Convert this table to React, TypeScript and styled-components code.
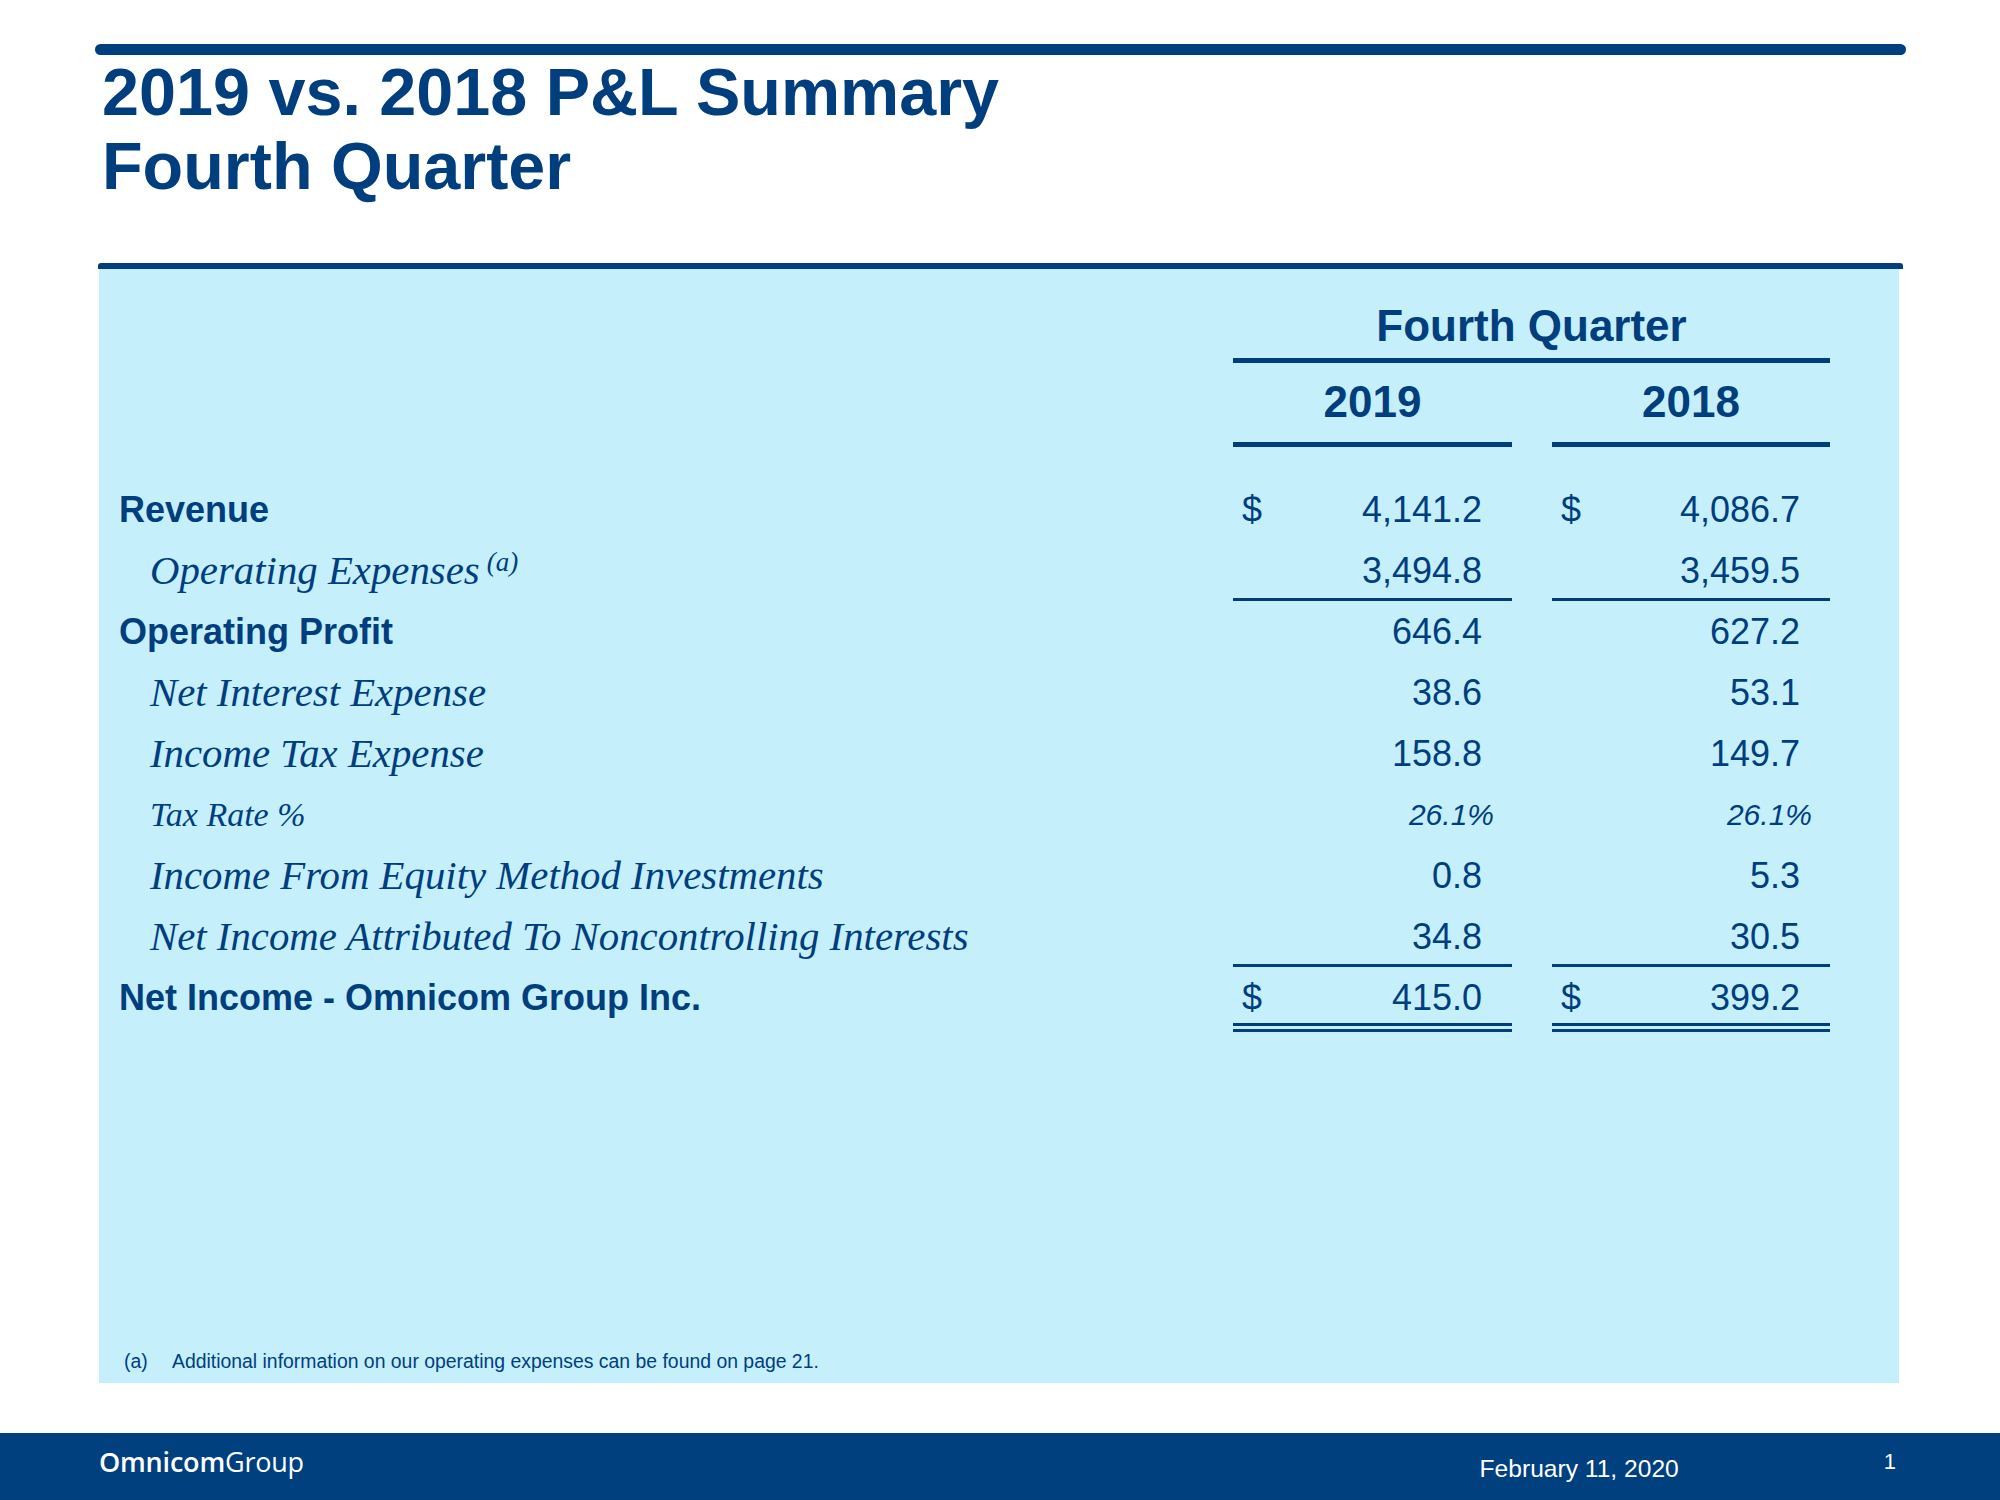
import styled, { createGlobalStyle } from "styled-components";

const navy = "#003e7e";

const GlobalStyle = createGlobalStyle`
  html, body { margin: 0; padding: 0; background: #fff; }
  body { font-family: "Liberation Sans", Arial, sans-serif; color: ${navy}; }
`;

type Cell = { v: string; dollar?: boolean };
type Row = {
  label: string;
  kind: "bold" | "italic" | "small";
  note?: string;
  a: Cell;
  b: Cell;
  rule?: "single" | "double";
  pct?: boolean;
};

const rows: Row[] = [
  { label: "Revenue", kind: "bold", a: { v: "4,141.2", dollar: true }, b: { v: "4,086.7", dollar: true } },
  { label: "Operating Expenses", kind: "italic", note: "(a)", a: { v: "3,494.8" }, b: { v: "3,459.5" }, rule: "single" },
  { label: "Operating Profit", kind: "bold", a: { v: "646.4" }, b: { v: "627.2" } },
  { label: "Net Interest Expense", kind: "italic", a: { v: "38.6" }, b: { v: "53.1" } },
  { label: "Income Tax Expense", kind: "italic", a: { v: "158.8" }, b: { v: "149.7" } },
  { label: "Tax Rate %", kind: "small", a: { v: "26.1%" }, b: { v: "26.1%" }, pct: true },
  { label: "Income From Equity Method Investments", kind: "italic", a: { v: "0.8" }, b: { v: "5.3" } },
  { label: "Net Income Attributed To Noncontrolling Interests", kind: "italic", a: { v: "34.8" }, b: { v: "30.5" }, rule: "single" },
  { label: "Net Income - Omnicom Group Inc.", kind: "bold", a: { v: "415.0", dollar: true }, b: { v: "399.2", dollar: true }, rule: "double" },
];

export default function App() {
  return (
    <>
      <GlobalStyle />
      <Page>
        <Header>
          <TopRule />
          <Title>
            <span>2019 vs. 2018 P&amp;L Summary</span>
            <span>Fourth Quarter</span>
          </Title>
        </Header>
        <SectionRule />
        <Panel>
          <HeadGrid>
            <QuarterHead>Fourth Quarter</QuarterHead>
            <span />
            <YearHead>2019</YearHead>
            <YearHead>2018</YearHead>
          </HeadGrid>
          <BodyGrid>
            {rows.map((r) => (
              <RowFrag key={r.label} row={r} />
            ))}
          </BodyGrid>
          <Footnote>
            <NoteMark>(a)</NoteMark>Additional information on our operating expenses can be found on page 21.
          </Footnote>
        </Panel>
        <Footer>
          <Logo>
            <b>Omnicom</b>Group
          </Logo>
          <DateText>February 11, 2020</DateText>
          <PageNo>1</PageNo>
        </Footer>
      </Page>
    </>
  );
}

function RowFrag({ row }: { row: Row }) {
  return (
    <>
      <Label $kind={row.kind}>
        {row.label}
        {row.note && <Note>{row.note}</Note>}
      </Label>
      {[row.a, row.b].map((c, i) => (
        <Amount key={i} $rule={row.rule} $pct={row.pct}>
          <span>{c.dollar ? "$" : ""}</span>
          <span>{c.v}</span>
        </Amount>
      ))}
    </>
  );
}

const Page = styled.div`
  width: 2000px;
  height: 1500px;
  display: flex;
  flex-direction: column;
  background: #fff;
  overflow: hidden;
`;

const Header = styled.header`
  padding: 44px 94px 0 95px;
`;

const TopRule = styled.div`
  height: 11px;
  border-radius: 6px;
  background: ${navy};
`;

const Title = styled.h1`
  margin: 0;
  padding-left: 7px;
  font: bold 66.5px/74px "Liberation Sans", Arial, sans-serif;
  color: ${navy};
  span {
    display: block;
  }
`;

const SectionRule = styled.div`
  margin: 60px 97px 0 98px;
  height: 6px;
  border-radius: 3px 3px 0 0;
  background: ${navy};
`;

const Panel = styled.section`
  margin: 0 101px 0 99px;
  height: 1114px;
  box-sizing: border-box;
  background: #c6effc;
  padding: 32px 69px 12px 20px;
  display: flex;
  flex-direction: column;
`;

const HeadGrid = styled.div`
  display: grid;
  grid-template-columns: 1fr 279px 278px;
  column-gap: 40px;
`;

const QuarterHead = styled.div`
  grid-column: 2 / 4;
  text-align: center;
  font: bold 44px/50px "Liberation Sans", Arial, sans-serif;
  padding-bottom: 7px;
  border-bottom: 5px solid ${navy};
`;

const YearHead = styled.div`
  text-align: center;
  font: bold 44px/50px "Liberation Sans", Arial, sans-serif;
  padding: 14px 0 15px;
  border-bottom: 5px solid ${navy};
`;

const BodyGrid = styled.div`
  margin-top: 32px;
  display: grid;
  grid-template-columns: 1fr 279px 278px;
  grid-template-rows: repeat(8, 61px) 65px;
  column-gap: 40px;
`;

const Label = styled.div<{ $kind: Row["kind"] }>`
  white-space: nowrap;
  line-height: 61px;
  padding-left: ${(p) => (p.$kind === "bold" ? "0" : "31px")};
  font-family: ${(p) =>
    p.$kind === "bold" ? `"Liberation Sans", Arial, sans-serif` : `"Liberation Serif", "Times New Roman", serif`};
  font-weight: ${(p) => (p.$kind === "bold" ? 700 : 400)};
  font-style: ${(p) => (p.$kind === "bold" ? "normal" : "italic")};
  font-size: ${(p) => (p.$kind === "bold" ? "36px" : p.$kind === "small" ? "34px" : "40.8px")};
`;

const Note = styled.span`
  font-size: 27px;
  line-height: 1;
  margin-left: 7px;
  vertical-align: 13px;
`;

const Amount = styled.div<{ $rule?: "single" | "double"; $pct?: boolean }>`
  box-sizing: border-box;
  display: flex;
  justify-content: space-between;
  padding: 0 ${(p) => (p.$pct ? "18px" : "30px")} 0 9px;
  line-height: 61px;
  font-size: ${(p) => (p.$pct ? "30px" : "36px")};
  font-style: ${(p) => (p.$pct ? "italic" : "normal")};
  border-bottom: ${(p) =>
    p.$rule === "double" ? `9px double ${navy}` : p.$rule === "single" ? `3px solid ${navy}` : "none"};
`;

const Footnote = styled.div`
  margin-top: auto;
  padding-left: 5px;
  font-size: 19.4px;
  line-height: 20px;
  color: ${navy};
`;

const NoteMark = styled.span`
  display: inline-block;
  width: 48px;
`;

const Footer = styled.footer`
  margin-top: auto;
  height: 67px;
  background: #00407e;
  color: #fff;
  display: flex;
  align-items: flex-start;
  padding: 0 104px 0 99px;
`;

const Logo = styled.div`
  margin-top: 15px;
  font: 400 27px/1 "Open Sans", sans-serif;
  letter-spacing: -0.2px;
  b {
    font-weight: 600;
  }
`;

const DateText = styled.div`
  margin: 24px 0 0 auto;
  font: 24.6px/1 "Liberation Sans", Arial, sans-serif;
`;

const PageNo = styled.div`
  margin: 18px 0 0 205px;
  font: 22px/1 "Liberation Sans", Arial, sans-serif;
`;
